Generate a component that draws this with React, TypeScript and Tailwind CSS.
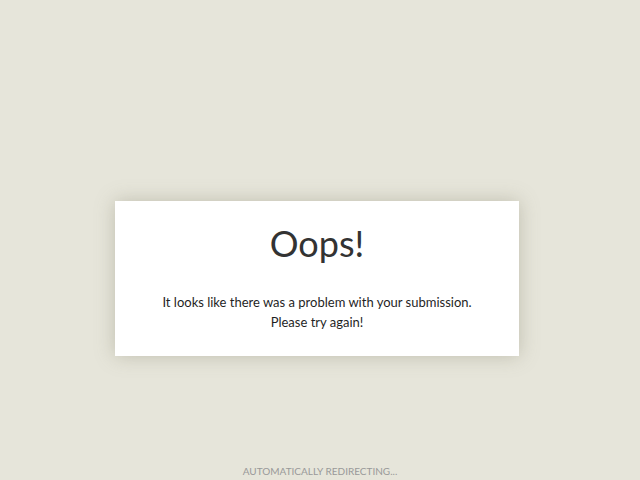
import React from "react";

const App: React.FC = () => {
  return (
    <div
      className="h-[480px] w-full bg-[#e6e5da] flex flex-col items-center overflow-hidden"
      style={{ fontFamily: "Lato, 'Open Sans', sans-serif" }}
    >
      <div className="mt-[201px] mr-[6px] w-[404px] h-[155px] bg-white shadow-[0_0_18px_rgba(120,118,95,0.35)] flex flex-col items-center">
        <h1 className="mt-[21px] text-[36px] leading-[42px] text-[#333] font-normal">Oops!</h1>
        <p className="mt-[28px] text-[13px] leading-[20px] text-[#1f1f1f] text-center">
          It looks like there was a problem with your submission.
          <br />
          Please try again!
        </p>
      </div>
      <div className="mt-auto mb-[2px] text-[10px] leading-[14px] uppercase text-[#999]">
        Automatically redirecting...
      </div>
    </div>
  );
};

export default App;
